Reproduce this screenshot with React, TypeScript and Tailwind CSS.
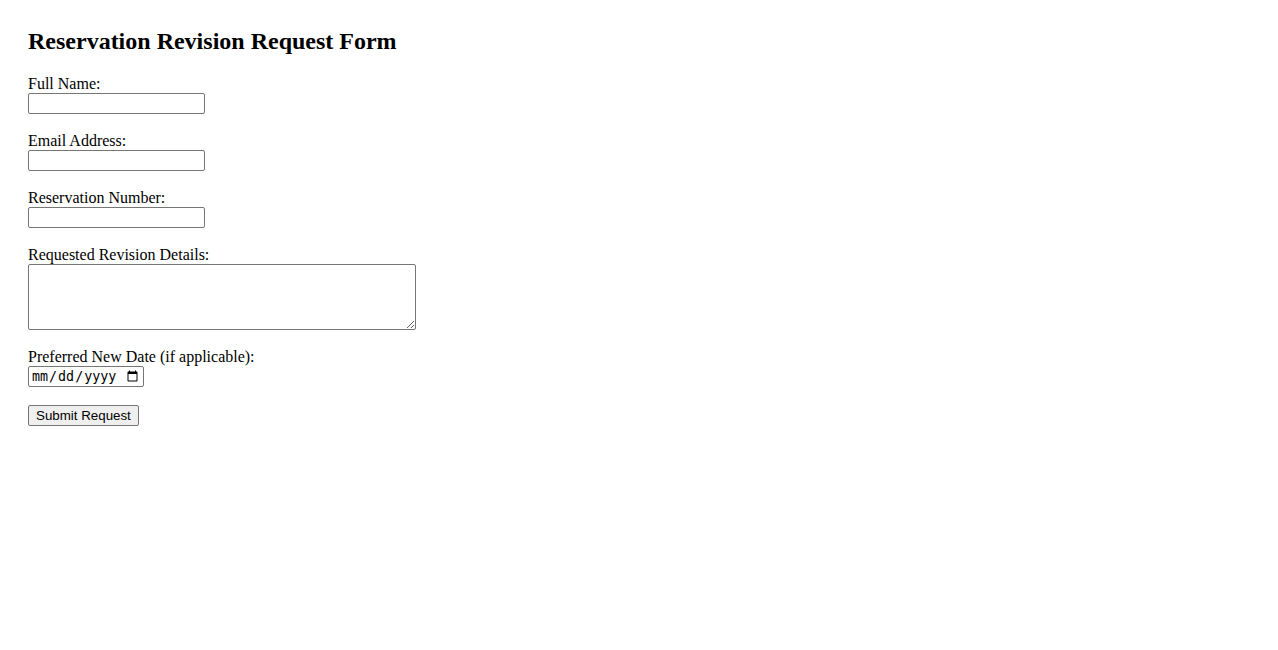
import React, { useState } from 'react';

const inputBox =
  'block w-[177px] h-[21px] border border-[#767676] rounded-[2px] bg-white px-[2px] text-[13.33px] font-["Liberation_Sans",Arial,sans-serif] outline-none';

const App: React.FC = () => {
  const [form, setForm] = useState({ name: '', email: '', number: '', details: '', date: '' });

  const update = (key: keyof typeof form) => (e: React.ChangeEvent<HTMLInputElement | HTMLTextAreaElement>) =>
    setForm(prev => ({ ...prev, [key]: e.target.value }));

  return (
    <div className="min-h-screen bg-white text-black font-['Liberation_Serif','Times_New_Roman',serif] text-[16px] px-[28px] pt-[27px]">
      <h2 className="text-[24px] font-bold leading-[28px] mb-[20px]">Reservation Revision Request Form</h2>

      <form onSubmit={e => e.preventDefault()} className="flex flex-col items-start">
        <label className="block leading-[18px]">Full Name:</label>
        <input type="text" value={form.name} onChange={update('name')} className={inputBox} />

        <label className="block leading-[18px] mt-[18px]">Email Address:</label>
        <input type="email" value={form.email} onChange={update('email')} className={inputBox} />

        <label className="block leading-[18px] mt-[18px]">Reservation Number:</label>
        <input type="text" value={form.number} onChange={update('number')} className={inputBox} />

        <label className="block leading-[18px] mt-[18px]">Requested Revision Details:</label>
        <textarea
          value={form.details}
          onChange={update('details')}
          className="block w-[388px] h-[66px] border border-[#767676] rounded-[2px] bg-white p-[2px] text-[13.33px] font-['Liberation_Mono',monospace] outline-none resize-y"
        />

        <label className="block leading-[18px] mt-[18px]">Preferred New Date (if applicable):</label>
        <input
          type="date"
          value={form.date}
          onChange={update('date')}
          className="block w-[116px] h-[21px] border border-[#767676] rounded-[2px] bg-white px-[2px] text-[13.33px] font-['DejaVu_Sans_Mono',monospace] outline-none"
        />

        <button
          type="submit"
          className="mt-[18px] h-[21px] px-[7px] border border-[#767676] rounded-[2px] bg-[#efefef] text-[13.33px] leading-[17px] font-['Liberation_Sans',Arial,sans-serif] text-black"
        >
          Submit Request
        </button>
      </form>
    </div>
  );
};

export default App;
